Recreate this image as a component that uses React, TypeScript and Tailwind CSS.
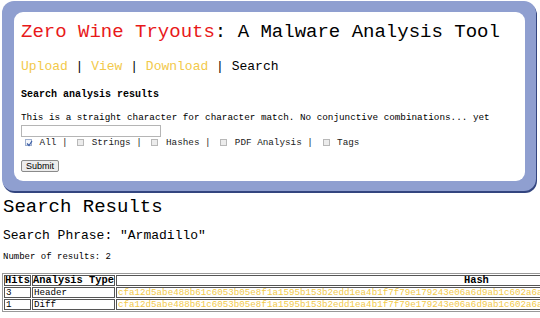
import React from "react";

const HASH =
  "cfa12d5abe488b61c6053b05e8f1a1595b153b2edd1ea4b1f7f79e179243e06a6d9ab1c602a6a8e3b4f1c27d90a5b6e4f3c1d2a8b7e6f5c4d3b2a1908f7e6d5c4b";

function Box({ checked }: { checked?: boolean }) {
  return (
    <span
      className={
        "relative inline-block w-[7px] h-[7px] ml-[4px] mr-[2px] border align-[-1px] " +
        (checked ? "border-[#9fb0cf] bg-[#f4f6fa]" : "border-[#b8b8b8] bg-[#ececec]")
      }
    >
      {checked && (
        <svg viewBox="0 0 7 7" className="absolute left-0 top-0 w-[7px] h-[7px]">
          <path d="M1 3.5 L3 5.5 L6 1" fill="none" stroke="#3d5ea6" strokeWidth="1.2" />
        </svg>
      )}
    </span>
  );
}

export default function App() {
  const mono = { fontFamily: '"Liberation Mono", "Courier New", monospace' };
  return (
    <div className="w-[540px] h-[318px] overflow-hidden bg-white text-black" style={mono}>
      <div className="mt-[1px] ml-[2px] w-[534px] h-[190px] rounded-[12px] bg-[#8f9fd0] shadow-[1px_2px_0_#33457f] pt-[11px] pl-[12px] pr-[11px] pb-[10px]">
        <div className="h-full rounded-[9px] bg-white pl-[7px] pt-[9px]">
          <div className="text-[19px] leading-[22px] whitespace-pre">
            <span className="text-[#e8191a]">Zero Wine Tryouts</span>: A Malware Analysis Tool
          </div>
          <div className="mt-[16px] text-[13px] leading-[16px] whitespace-pre">
            <span className="text-[#f2c94a]">Upload</span> | <span className="text-[#f2c94a]">View</span> |{" "}
            <span className="text-[#f2c94a]">Download</span> | Search
          </div>
          <div className="mt-[14px] text-[10px] leading-[12px] font-bold">Search analysis results</div>
          <div className="mt-[11px] text-[9.3px] leading-[11px] whitespace-pre">
            This is a straight character for character match. No conjunctive combinations... yet
          </div>
          <div className="mt-[2px] w-[140px] h-[12px] border border-[#b5b5b5] bg-white" />
          <div className="text-[9.3px] leading-[11px] whitespace-pre text-[#222]">
            <Box checked /> All | <Box /> Strings | <Box /> Hashes | <Box /> PDF Analysis | <Box /> Tags
          </div>
          <button
            className="mt-[12px] w-[38px] h-[12px] flex items-center justify-center rounded-[2px] border border-[#8a8a8a] bg-[#ececec] text-[9px] leading-[9px] text-black"
            style={{ fontFamily: '"Liberation Sans", Arial, sans-serif' }}
          >
            Submit
          </button>
        </div>
      </div>
      <div className="pl-[3px]">
        <div className="mt-[5px] text-[19px] leading-[22px]">Search Results</div>
        <div className="mt-[10px] text-[13px] leading-[16px] whitespace-pre">Search Phrase: "Armadillo"</div>
        <div className="mt-[8px] text-[9px] leading-[11px]">Number of results: 2</div>
      </div>
      <table className="mt-[10px] ml-[2px] border border-[#999] border-separate border-spacing-[1px] w-[820px]">
        <thead>
          <tr className="text-[10.4px] leading-[9px] font-bold">
            <th className="border border-[#555] p-0 w-[25px] text-left h-[10px]">Hits</th>
            <th className="border border-[#555] p-0 w-[83px] text-left whitespace-pre">Analysis Type</th>
            <th className="border border-[#555] p-0 text-center">Hash</th>
          </tr>
        </thead>
        <tbody className="text-[9.2px] leading-[9px]">
          {[
            ["3", "Header"],
            ["1", "Diff"],
          ].map(([h, t]) => (
            <tr key={t}>
              <td className="border border-[#555] px-[1px] py-0 h-[9px]">{h}</td>
              <td className="border border-[#555] px-[1px] py-0">{t}</td>
              <td className="border border-[#555] px-[1px] py-0 text-[#f2c94a] whitespace-nowrap">{HASH}</td>
            </tr>
          ))}
        </tbody>
      </table>
    </div>
  );
}
